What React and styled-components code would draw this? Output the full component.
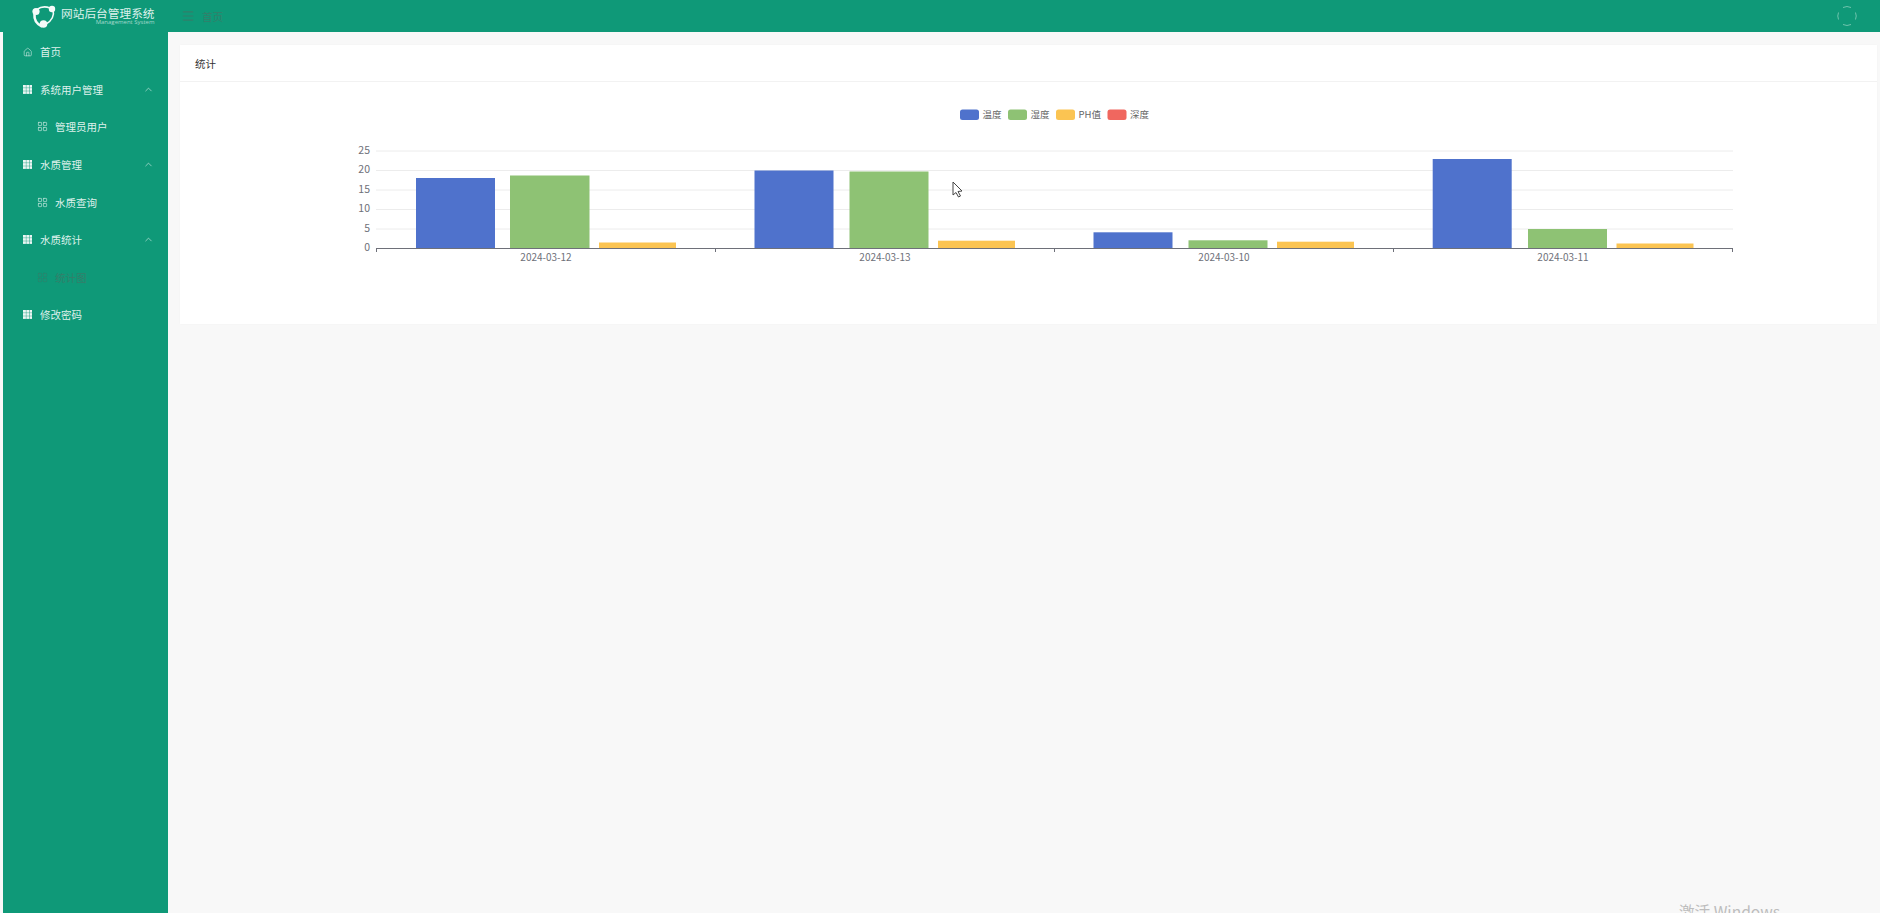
import React from 'react'
import styled, { createGlobalStyle } from 'styled-components'
import { Home, ChevronUp, LayoutGrid, Menu } from 'lucide-react'

const GlobalStyle = createGlobalStyle`
html, body { margin: 0; padding: 0; height: 100%; background: #f8f8f8; }
body { font-family: "Noto Sans CJK SC", "Noto Sans", sans-serif; overflow: hidden; }
`

const Page = styled.div`
position: relative;
width: 1880px;
height: 913px;
overflow: hidden;
display: flex;
flex-direction: column;
`

const Header = styled.header`
height: 32px;
flex: none;
background: #0f9978;
display: flex;
align-items: center;
padding-left: 30px;
padding-right: 22px;
`

const Brand = styled.div`
display: flex;
align-items: center;
width: 126px;
gap: 5px;
flex: none;
`

const BrandText = styled.div`
display: flex;
flex-direction: column;
align-items: flex-end;
color: #dff1ec;
`

const BrandTitle = styled.div`
font-size: 11.7px;
line-height: 13px;
white-space: nowrap;
`

const BrandSub = styled.div`
font-size: 6px;
line-height: 7px;
font-family: "Open Sans", sans-serif;
opacity: .7;
white-space: nowrap;
`

const Crumb = styled.div`
display: flex;
align-items: center;
gap: 7px;
margin-left: 25px;
color: #337f6a;
font-size: 10.5px;
flex: 1;
`

const Body = styled.div`
flex: 1;
display: flex;
min-height: 0;
padding-left: 3px;
`

const Sidebar = styled.nav`
width: 165px;
flex: none;
background: #0f9978;
padding-top: 1px;
`

const Item = styled.div`
height: 37.6px;
display: flex;
align-items: center;
gap: ${props => props.$sub ? '7px' : '8px'};
padding-left: ${props => props.$sub ? '34px' : '19.5px'};
padding-right: 14px;
font-size: 10.5px;
color: ${props => props.$dim ? '#337f6a' : '#dff1ec'};
`

const IconSlot = styled.span`
width: ${props => props.$sub ? '11px' : '9.5px'};
flex: none;
display: flex;
align-items: center;
justify-content: center;
`

const Label = styled.span`
flex: 1;
white-space: nowrap;
`

const Main = styled.main`
flex: 1;
padding: 13px 3px 0 12px;
min-width: 0;
`

const Card = styled.section`
background: #fff;
height: 279px;
box-shadow: 0 0 2px rgba(0,0,0,.03);
`

const CardHead = styled.div`
height: 36px;
border-bottom: 1px solid #f2f2f2;
display: flex;
align-items: center;
padding-left: 15px;
font-size: 10.5px;
color: #333;
`

const Chart = styled.svg`
display: block;
width: 1697px;
height: 242px;
`

const Watermark = styled.div`
position: absolute;
left: 1679px;
top: 899px;
font-size: 15.6px;
line-height: 24px;
color: #bdbdbd;
font-family: "Noto Sans CJK SC", "Open Sans", sans-serif;
white-space: nowrap;
`

const Spinner = styled.svg`
display: block;
width: 22px;
height: 22px;
`

const TableIcon = () => (
  <svg width="9.5" height="9" viewBox="0 0 9.5 9" fill="#eaf6f3">
    {[0, 3.1, 6.2].map(y => [0, 3.3, 6.6].map(x => (
      <rect key={x + '-' + y} x={x} y={y} width="2.9" height="2.7" />
    )))}
  </svg>
)

const Logo = () => (
  <svg width="26" height="26" viewBox="0 0 26 26" fill="none">
    <path d="M7 6.500 C11 3.500 16 3.500 20 5" stroke="#f4fbf9" strokeWidth="1.600" />
    <path d="M23 7 C24.500 12 22 18 16 21" stroke="#f4fbf9" strokeWidth="1.600" />
    <path d="M4.500 11 C4 16 6.500 21 12 23.500" stroke="#f4fbf9" strokeWidth="2.600" />
    <circle cx="6" cy="8.500" r="3.600" fill="#f4fbf9" />
    <circle cx="22" cy="6" r="3.200" fill="#f4fbf9" />
    <circle cx="13.500" cy="21" r="3.800" fill="#f4fbf9" />
  </svg>
)

const menu = [
  { label: '首页', icon: 'home' },
  { label: '系统用户管理', icon: 'table', open: true },
  { label: '管理员用户', sub: true },
  { label: '水质管理', icon: 'table', open: true },
  { label: '水质查询', sub: true },
  { label: '水质统计', icon: 'table', open: true },
  { label: '统计图', sub: true, dim: true },
  { label: '修改密码', icon: 'table' },
]

const ticks = [
  { label: '25', y: 151 },
  { label: '20', y: 170.5 },
  { label: '15', y: 190 },
  { label: '10', y: 209.5 },
  { label: '5', y: 229 },
  { label: '0', y: 248 },
]

const BLUE = '#4f72cc'
const GREEN = '#8ec274'
const YELLOW = '#fbc452'
const RED = '#f0675f'

const bars = [
  { x: 416, w: 79, top: 178, fill: BLUE },
  { x: 510, w: 79.500, top: 175.500, fill: GREEN },
  { x: 599, w: 77, top: 242.500, fill: YELLOW },
  { x: 754.500, w: 79, top: 170.500, fill: BLUE },
  { x: 849.500, w: 79, top: 171.500, fill: GREEN },
  { x: 938, w: 77, top: 240.700, fill: YELLOW },
  { x: 1093.500, w: 79, top: 232.300, fill: BLUE },
  { x: 1188.500, w: 79, top: 240.300, fill: GREEN },
  { x: 1277, w: 77, top: 241.700, fill: YELLOW },
  { x: 1432.700, w: 79, top: 159, fill: BLUE },
  { x: 1528, w: 79, top: 229, fill: GREEN },
  { x: 1616.500, w: 77, top: 243.500, fill: YELLOW },
]

const groups = [
  { label: '2024-03-12', x: 546 },
  { label: '2024-03-13', x: 885 },
  { label: '2024-03-10', x: 1224 },
  { label: '2024-03-11', x: 1563 },
]

const legend = [
  { label: '温度', x: 960, fill: BLUE },
  { label: '湿度', x: 1008, fill: GREEN },
  { label: 'PH值', x: 1056, fill: YELLOW },
  { label: '深度', x: 1107.500, fill: RED },
]

const chartFont = '"Noto Sans CJK SC", "Noto Sans", sans-serif'

const App = () => {
  return (
    <Page>
      <GlobalStyle />
      <Header>
        <Brand>
          <Logo />
          <BrandText>
            <BrandTitle>网站后台管理系统</BrandTitle>
            <BrandSub>Management System</BrandSub>
          </BrandText>
        </Brand>
        <Crumb>
          <Menu size={14} color="#337f6a" strokeWidth={2} />
          <span>首页</span>
        </Crumb>
        <Spinner viewBox="0 0 22 22" fill="none" stroke="#6fc4ad" strokeWidth="1">
          <path d="M7 2.500 A9 9 0 0 1 15 2.500" />
          <path d="M19.500 7.500 A9 9 0 0 1 19.500 14.500" />
          <path d="M15 19.500 A9 9 0 0 1 7 19.500" />
          <path d="M2.500 14.500 A9 9 0 0 1 2.500 7.500" />
        </Spinner>
      </Header>
      <Body>
        <Sidebar>
          {menu.map(item => (
            <Item key={item.label} $sub={item.sub} $dim={item.dim}>
              <IconSlot $sub={item.sub}>
                {item.sub && <LayoutGrid size={11} strokeWidth={1.300} />}
                {item.icon === 'home' && <Home size={10.500} strokeWidth={1.400} />}
                {item.icon === 'table' && <TableIcon />}
              </IconSlot>
              <Label>{item.label}</Label>
              {item.open && <ChevronUp size={11} strokeWidth={1.300} />}
            </Item>
          ))}
        </Sidebar>
        <Main>
          <Card>
            <CardHead>统计</CardHead>
            <Chart viewBox="180 82 1697 242">
              {legend.map(l => (
                <g key={l.label}>
                  <rect x={l.x} y="109.500" width="19" height="10.500" rx="2.500" fill={l.fill} />
                  <text x={l.x + 22.500} y="118" fontSize="9.500" fill="#666" fontFamily={chartFont}>{l.label}</text>
                </g>
              ))}
              {ticks.map(t => (
                <g key={t.label}>
                  {t.y !== 248 && <line x1="376" x2="1733" y1={t.y} y2={t.y} stroke="#ececec" strokeWidth="1" />}
                  <text x="370" y={t.y + 2.500} textAnchor="end" fontSize="10.500" fill="#6e7079" fontFamily={chartFont}>{t.label}</text>
                </g>
              ))}
              {bars.map(b => (
                <rect key={b.x} x={b.x} y={b.top} width={b.w} height={248 - b.top} fill={b.fill} />
              ))}
              <line x1="376" x2="1733" y1="248.500" y2="248.500" stroke="#6e7079" strokeWidth="1" />
              {[376.500, 715.500, 1054.500, 1393.500, 1732.500].map(x => (
                <line key={x} x1={x} x2={x} y1="248" y2="252" stroke="#6e7079" strokeWidth="1" />
              ))}
              {groups.map(g => (
                <text key={g.label} x={g.x} y="261" textAnchor="middle" fontSize="10" fill="#6e7079" fontFamily={chartFont}>{g.label}</text>
              ))}
              <path d="M953 182 L953 195 L956 192.500 L958.500 197 L960.500 196 L958 191.500 L962 191 Z" fill="#fff" stroke="#444" strokeWidth="1" />
            </Chart>
          </Card>
        </Main>
      </Body>
      <Watermark>激活 Windows</Watermark>
    </Page>
  )
}

export default App
